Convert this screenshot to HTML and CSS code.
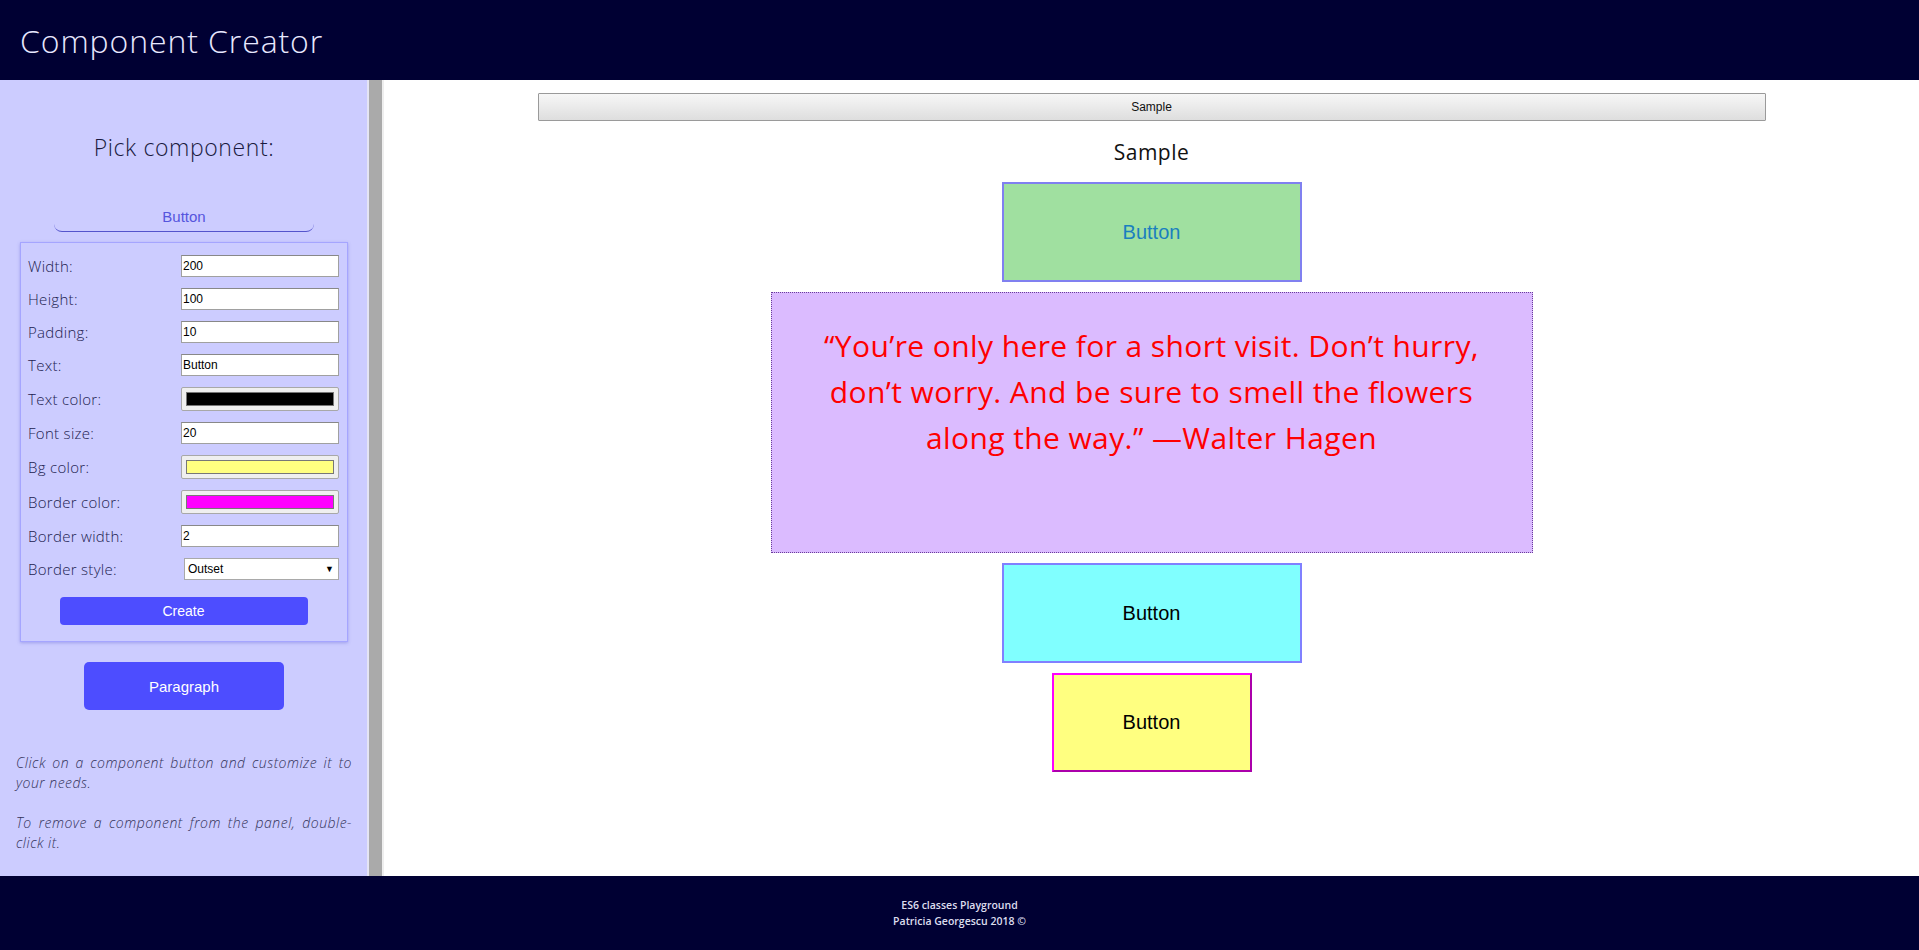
FILE: index.html
```html
<!DOCTYPE html>
<html lang="en">
<head>
<meta charset="utf-8">
<title>Component Creator</title>
<link rel="stylesheet" href="styles.css">
</head>
<body>
<header class="topbar">
  <h1 class="title">Component Creator</h1>
</header>
<div class="layout">
  <aside class="sidebar">
    <h2 class="pick-title">Pick component:</h2>
    <div class="tab">Button</div>
    <form class="config">
      <div class="rows">
        <label class="lbl">Width:</label><input class="field" type="text" value="200">
        <label class="lbl">Height:</label><input class="field" type="text" value="100">
        <label class="lbl">Padding:</label><input class="field" type="text" value="10">
        <label class="lbl">Text:</label><input class="field" type="text" value="Button">
        <label class="lbl">Text color:</label><span class="color-field"><span class="swatch" style="background:#000000"></span></span>
        <label class="lbl">Font size:</label><input class="field" type="text" value="20">
        <label class="lbl">Bg color:</label><span class="color-field"><span class="swatch" style="background:#ffff80"></span></span>
        <label class="lbl">Border color:</label><span class="color-field"><span class="swatch" style="background:#ff00ff"></span></span>
        <label class="lbl">Border width:</label><input class="field" type="text" value="2">
        <label class="lbl">Border style:</label><span class="select"><span>Outset</span><span class="arrow">▼</span></span>
      </div>
      <button type="button" class="create">Create</button>
    </form>
    <button type="button" class="comp-btn">Paragraph</button>
    <p class="help">Click on a component button and customize it to your needs.</p>
    <p class="help">To remove a component from the panel, double-click it.</p>
  </aside>
  <div class="divider"></div>
  <main class="canvas">
    <button type="button" class="sample-bar">Sample</button>
    <h3 class="sample-title">Sample</h3>
    <div class="stack">
      <div class="comp comp-green">Button</div>
      <p class="quote">“You’re only here for a short visit. Don’t hurry, don’t worry. And be sure to smell the flowers along the way.” —Walter Hagen</p>
      <div class="comp comp-cyan">Button</div>
      <div class="comp comp-yellow">Button</div>
    </div>
  </main>
</div>
<footer class="footer">
  <div>ES6 classes Playground</div>
  <div>Patricia Georgescu 2018 ©</div>
</footer>
</body>
</html>
```
FILE: styles.css
```css
* { box-sizing: border-box; }
html, body { margin: 0; padding: 0; }
body {
  height: 950px;
  display: flex;
  flex-direction: column;
  font-family: "Open Sans", "Liberation Sans", sans-serif;
  overflow: hidden;
}
.topbar {
  height: 80px;
  flex: none;
  background: #000033;
  display: flex;
  align-items: center;
  padding-left: 20px;
}
.title {
  margin: 0;
  color: #e8e8ff;
  font-weight: 300;
  font-size: 32px;
  letter-spacing: 0.9px;
}
.layout {
  flex: 1;
  display: flex;
  min-height: 0;
}
.sidebar {
  width: 367px;
  flex: none;
  background: #ccccff;
  padding: 0 15px 0 16px;
  color: #22224a;
}
.divider {
  width: 17px;
  flex: none;
  background: #aaaaaa;
  border-left: 2px solid #e4e4f4;
  border-right: 2px solid #eeeeee;
}
.pick-title {
  margin: 52px 0 0;
  text-align: center;
  font-weight: 300;
  font-size: 23px;
  letter-spacing: 0.6px;
  line-height: 30px;
  color: #1a1a40;
}
.tab {
  width: 260px;
  margin: 40px auto 0;
  padding: 6px 0 5px;
  text-align: center;
  font-family: "Liberation Sans", Arial, sans-serif;
  font-size: 15px;
  line-height: 18px;
  color: #5555dd;
  border-bottom: 1px solid #5555cc;
  border-radius: 0 0 8px 8px;
}
.config {
  margin: 10px 4px 0;
  border: 1px solid #a5a5ff;
  box-shadow: 0 1px 3px rgba(80, 80, 200, 0.35);
  padding: 12px 8px 16px 7px;
}
.rows {
  display: grid;
  grid-template-columns: 1fr 158px;
  row-gap: 11px;
  align-items: center;
}
.lbl {
  font-size: 15px;
  font-weight: 300;
  letter-spacing: 0.3px;
  color: #222250;
}
.field {
  height: 22px;
  width: 158px;
  border: 1px solid #a0a0a0;
  border-top-color: #888;
  background: #fff;
  padding: 0 1px;
  font-family: "Liberation Sans", Arial, sans-serif;
  font-size: 12px;
  color: #000;
  outline: none;
}
.color-field {
  height: 24px;
  width: 158px;
  display: flex;
  padding: 4px;
  background: #efefef;
  border: 1px solid #a8a8a8;
  border-radius: 2px;
}
.swatch {
  flex: 1;
  border: 1px solid #777;
}
.select {
  justify-self: end;
  width: 155px;
  height: 22px;
  display: flex;
  align-items: center;
  justify-content: space-between;
  padding: 0 4px 0 3px;
  background: #fff;
  border: 1px solid #a9a9a9;
  font-family: "Liberation Sans", Arial, sans-serif;
  font-size: 12px;
  color: #000;
}
.arrow { font-size: 9px; }
.create {
  display: block;
  width: 248px;
  height: 28px;
  margin: 17px auto 0;
  border: none;
  border-radius: 4px;
  background: #4d4dff;
  color: #fff;
  font-family: "Liberation Sans", Arial, sans-serif;
  font-size: 14px;
}
.comp-btn {
  display: block;
  width: 200px;
  height: 48px;
  margin: 20px auto 0;
  border: none;
  border-radius: 5px;
  background: #4d4dff;
  color: #fff;
  font-family: "Liberation Sans", Arial, sans-serif;
  font-size: 15px;
}
.help {
  margin: 43px 0 0;
  font-style: italic;
  font-weight: 300;
  font-size: 14px;
  letter-spacing: 0.5px;
  line-height: 20px;
  text-align: justify;
  color: #33335a;
}
.help + .help { margin-top: 20px; }
.canvas {
  flex: 1;
  background: #fff;
  display: flex;
  flex-direction: column;
  align-items: center;
  padding-top: 13px;
}
.sample-bar {
  width: 80%;
  height: 28px;
  border: 1px solid #9a9a9a;
  border-radius: 1px;
  background: linear-gradient(#f7f7f7, #dedede);
  font-family: "Liberation Sans", Arial, sans-serif;
  font-size: 12px;
  color: #111;
}
.sample-title {
  margin: 17px 0 0;
  font-weight: 400;
  font-size: 21px;
  letter-spacing: 0.5px;
  line-height: 28px;
  color: #111;
}
.stack {
  margin-top: 16px;
  display: flex;
  flex-direction: column;
  align-items: center;
  gap: 10px;
}
.comp {
  display: flex;
  align-items: center;
  justify-content: center;
  height: 100px;
  font-family: "Liberation Sans", Arial, sans-serif;
  font-size: 20px;
}
.comp-green {
  width: 300px;
  background: #a0e0a0;
  border: 2px solid #8080f0;
  color: #1a7fbf;
}
.quote {
  margin: 0;
  width: 762px;
  height: 261px;
  padding: 30px 40px;
  background: #dbbbff;
  border: 1px dotted #6a3d9a;
  color: #ff0000;
  text-align: center;
  font-size: 30px;
  letter-spacing: 0.4px;
  line-height: 46px;
}
.comp-cyan {
  width: 300px;
  background: #80ffff;
  border: 2px solid #8080ff;
  color: #000;
}
.comp-yellow {
  width: 200px;
  height: 99px;
  background: #ffff80;
  border: 2px outset #ff00ff;
  color: #000;
}
.footer {
  height: 74px;
  flex: none;
  background: #000033;
  color: #dde;
  display: flex;
  flex-direction: column;
  align-items: center;
  justify-content: center;
  font-size: 10.5px;
  font-weight: 600;
  line-height: 16px;
}
```
